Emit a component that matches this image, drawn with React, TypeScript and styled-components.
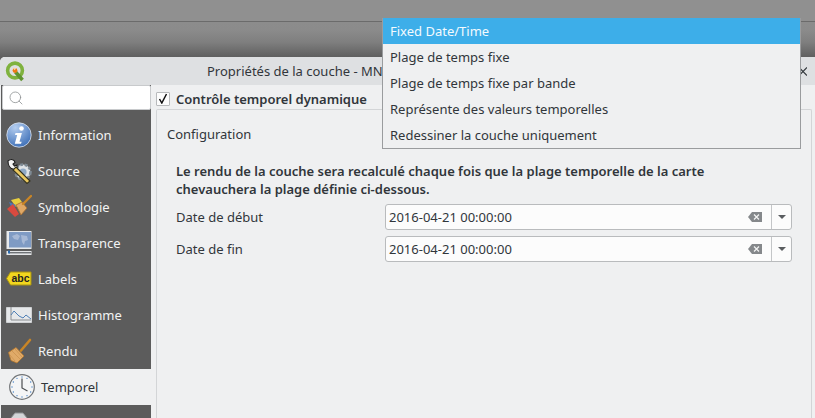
import React from "react";
import styled, { createGlobalStyle } from "styled-components";
import { Search } from "lucide-react";

const Global = createGlobalStyle`
  html, body { margin: 0; padding: 0; width: 815px; height: 418px; overflow: hidden; background: #8c8c8c; }
  * { box-sizing: border-box; }
  body { font-family: "Noto Sans", sans-serif; font-size: 13px; color: #31363b; }
`;

const Page = styled.div`
  position: relative;
  width: 815px;
  height: 418px;
  overflow: hidden;
  display: flex;
  flex-direction: column;
  background: linear-gradient(#8f8f8f 0, #8b8b8b 30px, #7f7f7f 42px, #5f5f5f 57px);
`;
const TopBar = styled.div`
  height: 22px;
  flex: none;
  background: #909090;
  border-bottom: 1px solid #6b6b6b;
`;
const Spacer = styled.div`
  height: 35px;
  flex: none;
`;
const Win = styled.div`
  flex: 1;
  min-height: 0;
  margin-right: -6px;
  display: flex;
  flex-direction: column;
  background: #eff0f1;
  border-radius: 5px 5px 0 0;
  overflow: hidden;
`;
const TitleBar = styled.div`
  height: 28px;
  flex: none;
  background: #dee0e2;
  display: flex;
  align-items: center;
  padding-left: 5px;
  position: relative;
`;
const Title = styled.div`
  position: absolute;
  left: 207px;
  top: 5px;
  white-space: nowrap;
  color: #31363b;
  line-height: 18px;
`;
const Body = styled.div`
  flex: 1;
  display: flex;
  min-height: 0;
`;
const Side = styled.div`
  width: 150px;
  flex: none;
  margin-left: 1px;
  background: #5c5c5c;
  display: flex;
  flex-direction: column;
  overflow: hidden;
`;
const SearchBox = styled.div`
  height: 25px;
  flex: none;
  background: #fff;
  border: 1px solid #c8cacc;
  border-radius: 2px;
  margin-left: 1px;
  display: flex;
  align-items: center;
  padding-left: 5px;
  color: #8d9092;
  margin-bottom: 7px;
`;
const Item = styled.div<{ $active?: boolean }>`
  height: 36px;
  flex: none;
  display: flex;
  align-items: center;
  gap: 6px;
  padding-left: ${(p) => (p.$active ? "7px" : "4px")};
  background: ${(p) => (p.$active ? "#eff0f1" : "transparent")};
  color: ${(p) => (p.$active ? "#31363b" : "#f2f3f3")};
  font-size: 13px;
  white-space: nowrap;
`;
const Main = styled.div`
  flex: 1;
  min-width: 0;
  padding: 3px 0 0 5px;
  display: flex;
  flex-direction: column;
`;
const CheckRow = styled.div`
  display: flex;
  align-items: center;
  gap: 6px;
  height: 21px;
  font-weight: 600;
  flex: none;
`;
const Check = styled.div`
  width: 14px;
  height: 14px;
  background: #fcfcfc;
  border: 1px solid #b8babc;
  border-radius: 1px;
  display: flex;
  align-items: center;
  justify-content: center;
`;
const Group = styled.div`
  flex: 1;
  width: 656px;
  border: 1px solid #d3d5d7;
  border-bottom: none;
  border-radius: 2px 2px 0 0;
  padding: 15px 10px 0 10px;
`;
const ConfigLabel = styled.div`
  height: 18px;
  line-height: 18px;
  margin-bottom: 19px;
`;
const Note = styled.div`
  font-weight: 600;
  line-height: 18px;
  padding-left: 9px;
  margin-bottom: 6px;
  white-space: nowrap;
`;
const Row = styled.div`
  display: flex;
  align-items: center;
  height: 26px;
  margin-bottom: 6px;
  padding-left: 9px;
`;
const RowLabel = styled.div`
  width: 209px;
  flex: none;
`;
const Field = styled.div`
  width: 407px;
  height: 26px;
  background: #fcfcfc;
  border: 1px solid #b9bbbd;
  border-radius: 3px;
  display: flex;
  align-items: center;
  padding-left: 3px;
`;
const FieldText = styled.div`
  flex: 1;
`;
const ClearIcon = styled.svg`
  width: 14px;
  height: 10px;
  margin-right: 9px;
`;
const Drop = styled.div`
  width: 20px;
  height: 100%;
  border-left: 1px solid #c4c6c8;
  display: flex;
  align-items: center;
  justify-content: center;
`;
const Caret = styled.div`
  width: 0;
  height: 0;
  border-left: 4px solid transparent;
  border-right: 4px solid transparent;
  border-top: 4px solid #5a5d60;
`;
const Popup = styled.div`
  position: absolute;
  left: 382px;
  top: 18px;
  width: 419px;
  height: 131px;
  background: #eff0f1;
  border: 1px solid #9a9c9e;
  display: flex;
  flex-direction: column;
`;
const PopupItem = styled.div<{ $sel?: boolean }>`
  height: 26px;
  flex: none;
  line-height: 26px;
  padding-left: 7px;
  margin-top: ${(p) => (p.$sel ? "-1px" : "0")};
  background: ${(p) => (p.$sel ? "#3daee9" : "transparent")};
  color: ${(p) => (p.$sel ? "#f4fafe" : "#31363b")};
  white-space: nowrap;
`;
const CloseMark = styled.svg`
  position: absolute;
  right: 14px;
  top: 10px;
  width: 8px;
  height: 9px;
`;
const IconSlot = styled.div`
  width: 27px;
  flex: none;
  display: flex;
  align-items: center;
  justify-content: center;
`;

const QgisLogo = () => (
  <svg width="21" height="21" viewBox="0 0 21 21">
    <circle cx="10" cy="9.5" r="7.4" fill="none" stroke="#7fb23e" strokeWidth="3.6" />
    <path d="M10.5 11l7 8" stroke="#5f9430" strokeWidth="3.6" />
    <circle cx="10" cy="9.5" r="2.4" fill="#ee7913" />
    <path d="M7.5 6.5l4 .8-2 2z" fill="#f7d3a8" />
  </svg>
);
const InfoIcon = () => (
  <svg width="26" height="26" viewBox="0 0 26 26">
    <defs>
      <radialGradient id="ig" cx="35%" cy="20%" r="90%">
        <stop offset="0" stopColor="#b4cdef" />
        <stop offset="1" stopColor="#3569b4" />
      </radialGradient>
    </defs>
    <circle cx="13" cy="13" r="12.2" fill="url(#ig)" stroke="#dfe6f0" strokeWidth="0.8" />
    <circle cx="15.5" cy="6.5" r="2.3" fill="#fff" />
    <path d="M9.5 11h6.4l-2.4 8.8h2.2l-.7 1.9H8.8l2.4-8.8H9z" fill="#fff" />
  </svg>
);
const SourceIcon = () => (
  <svg width="26" height="26" viewBox="0 0 26 26">
    <circle cx="17" cy="14" r="7.5" fill="#dfe3e6" stroke="#7e8a94" strokeWidth="2.6" strokeDasharray="3 1.6" />
    <circle cx="17" cy="14" r="3.6" fill="#8fa9c4" />
    <path d="M2 3c3-2.500 6.500-1.500 7 1.500L7 6l1.500 2 2.500-1c1 3-1.500 5-4 4C4 10.500 2 7 2 3z" fill="#f4f4f4" stroke="#1c1c1c" strokeWidth="1.100" />
    <path d="M10 9l14 14-3 2.500L7 12z" fill="#e9c75f" stroke="#33321f" strokeWidth="1.100" />
  </svg>
);
const SymbolIcon = () => (
  <svg width="26" height="26" viewBox="0 0 26 26">
    <path d="M5 6l8-2 3 4-6 5z" fill="#e8cf3f" />
    <path d="M3 8l7 3-4 4z" fill="#4c79b8" />
    <path d="M1 15l6-5 6 10-4 3z" fill="#d84a3f" />
    <path d="M10 11l6-3 5 6-6 7z" fill="#dfa866" stroke="#a86f30" strokeWidth="0.8" />
    <path d="M17 10l8-8" stroke="#c98526" strokeWidth="2.400" strokeLinecap="round" />
  </svg>
);
const TransIcon = () => (
  <svg width="26" height="26" viewBox="0 0 26 26">
    <rect x="0.5" y="1" width="25" height="18" fill="#e8eaec" />
    <rect x="3" y="2" width="22" height="15.500" fill="#7f9bc4" />
    <path d="M6 6l5-2 3 2-2 4-4-1zM15 5l6 1 1 4-3 1-1 4-2-3z" fill="#a7b9d6" />
    <rect x="0.5" y="21" width="25" height="4" fill="#e3e5e7" />
    <rect x="3" y="22" width="22" height="1.400" fill="#6e7276" />
    <rect x="2" y="20.500" width="2" height="3" fill="#2c6cb0" />
  </svg>
);
const LabelIcon = () => (
  <svg width="26" height="16" viewBox="0 0 26 16">
    <path d="M4.500 1H25v13H4.500L.5 7.500z" fill="#f2d71e" stroke="#a89312" />
    <text x="5.500" y="11.300" fontFamily="Liberation Sans" fontWeight="700" fontSize="10.500" fill="#222">abc</text>
  </svg>
);
const HistIcon = () => (
  <svg width="26" height="18" viewBox="0 0 26 18">
    <path d="M.5 1.500h25v15H.5z" fill="#e6e8ea" stroke="#cfd1d3" />
    <path d="M5 1v13h20" fill="none" stroke="#8a8d90" />
    <path d="M5 9l3-4 5 5 4 2 3-3 5 4" fill="none" stroke="#4f7fb5" />
  </svg>
);
const BrushIcon = () => (
  <svg width="26" height="26" viewBox="0 0 26 26">
    <path d="M2.500 14.500l7.500-5 8 8.500-7 7-6-2.500z" fill="#e0aa68" stroke="#b5792f" strokeWidth="0.8" />
    <path d="M6 13l8 8M9 11l7 8M4 17l5 6" stroke="#c98f4c" strokeWidth="0.7" />
    <path d="M15 12.500l9-10.500" stroke="#c98526" strokeWidth="2.600" strokeLinecap="round" />
  </svg>
);
const ClockIcon = () => (
  <svg width="26" height="26" viewBox="0 0 26 26">
    <circle cx="13" cy="13" r="12.300" fill="#f4f5f6" stroke="#6f7275" strokeWidth="1.200" />
    <g fill="#4a86c8">
      {Array.from({ length: 12 }).map((_, i) => {
        const a = (i * Math.PI) / 6;
        return <circle key={i} cx={13 + 10 * Math.cos(a)} cy={13 + 10 * Math.sin(a)} r="0.7" />;
      })}
    </g>
    <path d="M13 4.500v9.500l5.500 3" fill="none" stroke="#4b4e51" strokeWidth="1.200" />
  </svg>
);
const PartialIcon = () => (
  <svg width="26" height="26" viewBox="0 0 26 26">
    <path d="M9 3h8l4 5v14H5V8z" fill="#d3d5d7" stroke="#8f9294" />
  </svg>
);
const Clear = () => (
  <ClearIcon viewBox="0 0 14 10">
    <path d="M4 0h10v10H4L0 5z" fill="#85888b" />
    <path d="M6 2.500l5 5M11 2.500l-5 5" stroke="#f4f4f4" strokeWidth="1.200" />
  </ClearIcon>
);

const items: [string, React.ReactNode][] = [
  ["Information", <InfoIcon />],
  ["Source", <SourceIcon />],
  ["Symbologie", <SymbolIcon />],
  ["Transparence", <TransIcon />],
  ["Labels", <LabelIcon />],
  ["Histogramme", <HistIcon />],
  ["Rendu", <BrushIcon />],
];

export default function App() {
  return (
    <Page>
      <Global />
      <TopBar />
      <Spacer />
      <Win>
        <TitleBar>
          <QgisLogo />
          <Title>Propriétés de la couche - MNT</Title>
          <CloseMark viewBox="0 0 8 9">
            <path d="M0 0.500l8 8M8 0.500l-8 8" stroke="#31363b" strokeWidth="1.200" />
          </CloseMark>
        </TitleBar>
        <Body>
          <Side>
            <SearchBox>
              <Search size={16} strokeWidth={1.2} />
            </SearchBox>
            {items.map(([label, icon]) => (
              <Item key={label}>
                <IconSlot>{icon}</IconSlot>
                {label}
              </Item>
            ))}
            <Item $active>
              <IconSlot><ClockIcon /></IconSlot>
              Temporel
            </Item>
            <Item>
              <IconSlot><PartialIcon /></IconSlot>
            </Item>
          </Side>
          <Main>
            <CheckRow>
              <Check>
                <svg width="10" height="11" viewBox="0 0 10 11">
                  <path d="M1.500 6l2.300 4L8.500 1" fill="none" stroke="#111" strokeWidth="1.500" />
                </svg>
              </Check>
              Contrôle temporel dynamique
            </CheckRow>
            <Group>
              <ConfigLabel>Configuration</ConfigLabel>
              <Note>
                Le rendu de la couche sera recalculé chaque fois que la plage temporelle de la carte
                <br />
                chevauchera la plage définie ci-dessous.
              </Note>
              <Row>
                <RowLabel>Date de début</RowLabel>
                <Field>
                  <FieldText>2016-04-21 00:00:00</FieldText>
                  <Clear />
                  <Drop><Caret /></Drop>
                </Field>
              </Row>
              <Row>
                <RowLabel>Date de fin</RowLabel>
                <Field>
                  <FieldText>2016-04-21 00:00:00</FieldText>
                  <Clear />
                  <Drop><Caret /></Drop>
                </Field>
              </Row>
            </Group>
          </Main>
        </Body>
      </Win>
      <Popup>
        <PopupItem $sel>Fixed Date/Time</PopupItem>
        <PopupItem>Plage de temps fixe</PopupItem>
        <PopupItem>Plage de temps fixe par bande</PopupItem>
        <PopupItem>Représente des valeurs temporelles</PopupItem>
        <PopupItem>Redessiner la couche uniquement</PopupItem>
      </Popup>
    </Page>
  );
}
